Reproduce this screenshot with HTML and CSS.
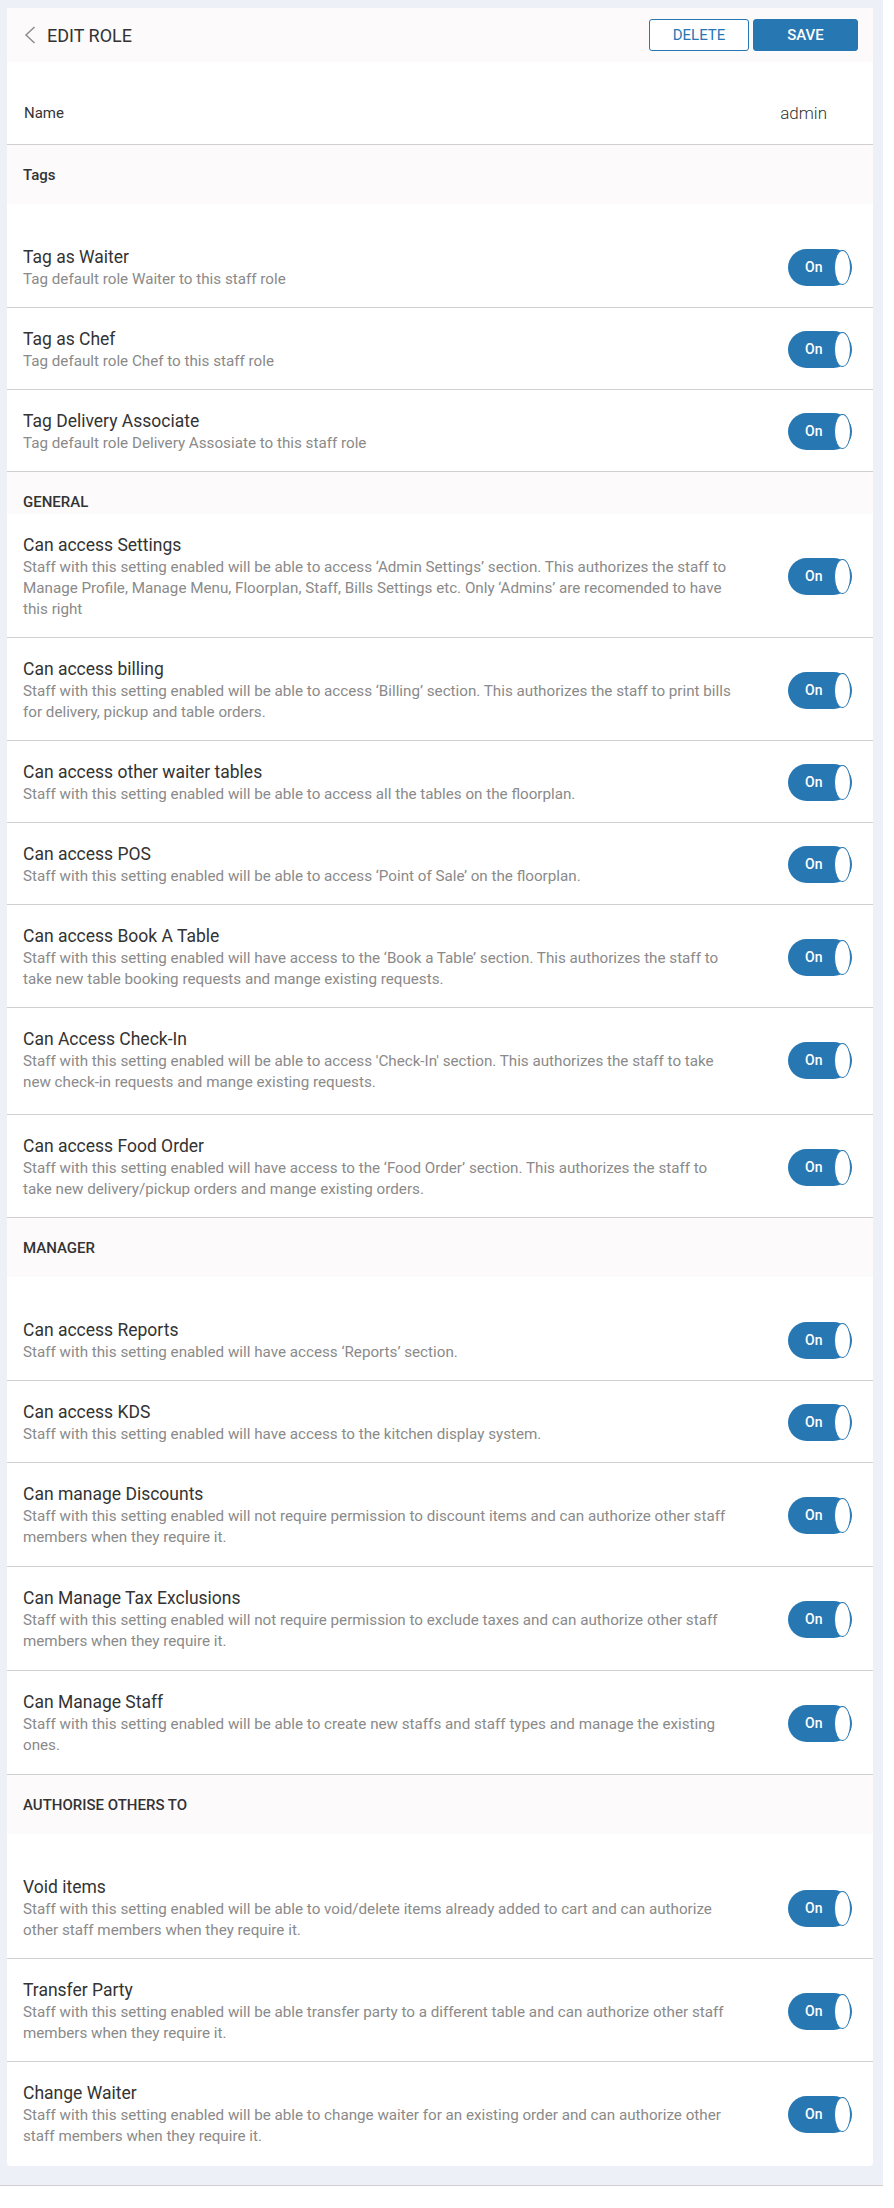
FILE: index.html
```html
<!DOCTYPE html>
<html>

<head>
  <meta charset="utf-8">
  <title>Edit Role</title>
  <link rel="stylesheet" href="styles.css">
</head>

<body>
  <div class="page">
    <div class="card">

      <div class="topbar">
        <div class="topbar-title">
          <svg class="back" width="12" height="18" viewBox="0 0 12 18">
            <path d="M10.5 1 L2 9 L10.5 17" fill="none" stroke="#8d8d8d" stroke-width="1.5" />
          </svg>
          <span>EDIT ROLE</span>
        </div>
        <div class="topbar-actions">
          <button class="btn btn-outline">DELETE</button>
          <button class="btn btn-primary">SAVE</button>
        </div>
      </div>

      <div class="name-row">
        <span class="name-label">Name</span>
        <span class="name-value">admin</span>
      </div>

      <!-- Tags -->
      <div class="section-head">Tags</div>
      <div class="section-body">
        <div class="row">
          <div class="row-text">
            <div class="row-title">Tag as Waiter</div>
            <div class="row-desc">Tag default role Waiter to this staff role</div>
          </div>
          <div class="toggle"><span>On</span></div>
        </div>
        <div class="row">
          <div class="row-text">
            <div class="row-title">Tag as Chef</div>
            <div class="row-desc">Tag default role Chef to this staff role</div>
          </div>
          <div class="toggle"><span>On</span></div>
        </div>
        <div class="row">
          <div class="row-text">
            <div class="row-title">Tag Delivery Associate</div>
            <div class="row-desc">Tag default role Delivery Assosiate to this staff role</div>
          </div>
          <div class="toggle"><span>On</span></div>
        </div>
      </div>

      <!-- General -->
      <div class="section-head section-head--short">GENERAL</div>
      <div class="section-body section-body--flush">
        <div class="row">
          <div class="row-text">
            <div class="row-title">Can access Settings</div>
            <div class="row-desc">Staff with this setting enabled will be able to access ‘Admin Settings’ section. This authorizes the staff to Manage Profile, Manage Menu, Floorplan, Staff, Bills Settings etc. Only ‘Admins’ are recomended to have this right</div>
          </div>
          <div class="toggle"><span>On</span></div>
        </div>
        <div class="row">
          <div class="row-text">
            <div class="row-title">Can access billing</div>
            <div class="row-desc">Staff with this setting enabled will be able to access ‘Billing’ section. This authorizes the staff to print bills for delivery, pickup and table orders.</div>
          </div>
          <div class="toggle"><span>On</span></div>
        </div>
        <div class="row">
          <div class="row-text">
            <div class="row-title">Can access other waiter tables</div>
            <div class="row-desc">Staff with this setting enabled will be able to access all the tables on the floorplan.</div>
          </div>
          <div class="toggle"><span>On</span></div>
        </div>
        <div class="row">
          <div class="row-text">
            <div class="row-title">Can access POS</div>
            <div class="row-desc">Staff with this setting enabled will be able to access ‘Point of Sale’ on the floorplan.</div>
          </div>
          <div class="toggle"><span>On</span></div>
        </div>
        <div class="row">
          <div class="row-text">
            <div class="row-title">Can access Book A Table</div>
            <div class="row-desc">Staff with this setting enabled will have access to the ‘Book a Table’ section. This authorizes the staff to take new table booking requests and mange existing requests.</div>
          </div>
          <div class="toggle"><span>On</span></div>
        </div>
        <div class="row row--looser">
          <div class="row-text">
            <div class="row-title">Can Access Check-In</div>
            <div class="row-desc">Staff with this setting enabled will be able to access 'Check-In' section. This authorizes the staff to take new check-in requests and mange existing requests.</div>
          </div>
          <div class="toggle"><span>On</span></div>
        </div>
        <div class="row">
          <div class="row-text">
            <div class="row-title">Can access Food Order</div>
            <div class="row-desc">Staff with this setting enabled will have access to the ‘Food Order’ section. This authorizes the staff to take new delivery/pickup orders and mange existing orders.</div>
          </div>
          <div class="toggle"><span>On</span></div>
        </div>
      </div>

      <!-- Manager -->
      <div class="section-head">MANAGER</div>
      <div class="section-body">
        <div class="row">
          <div class="row-text">
            <div class="row-title">Can access Reports</div>
            <div class="row-desc">Staff with this setting enabled will have access ‘Reports’ section.</div>
          </div>
          <div class="toggle"><span>On</span></div>
        </div>
        <div class="row">
          <div class="row-text">
            <div class="row-title">Can access KDS</div>
            <div class="row-desc">Staff with this setting enabled will have access to the kitchen display system.</div>
          </div>
          <div class="toggle"><span>On</span></div>
        </div>
        <div class="row row--loose">
          <div class="row-text">
            <div class="row-title">Can manage Discounts</div>
            <div class="row-desc">Staff with this setting enabled will not require permission to discount items and can authorize other staff members when they require it.</div>
          </div>
          <div class="toggle"><span>On</span></div>
        </div>
        <div class="row row--loose">
          <div class="row-text">
            <div class="row-title">Can Manage Tax Exclusions</div>
            <div class="row-desc">Staff with this setting enabled will not require permission to exclude taxes and can authorize other staff members when they require it.</div>
          </div>
          <div class="toggle"><span>On</span></div>
        </div>
        <div class="row row--loose">
          <div class="row-text">
            <div class="row-title">Can Manage Staff</div>
            <div class="row-desc">Staff with this setting enabled will be able to create new staffs and staff types and manage the existing ones.</div>
          </div>
          <div class="toggle"><span>On</span></div>
        </div>
      </div>

      <!-- Authorise others -->
      <div class="section-head">AUTHORISE OTHERS TO</div>
      <div class="section-body">
        <div class="row">
          <div class="row-text">
            <div class="row-title">Void items</div>
            <div class="row-desc">Staff with this setting enabled will be able to void/delete items already added to cart and can authorize other staff members when they require it.</div>
          </div>
          <div class="toggle"><span>On</span></div>
        </div>
        <div class="row">
          <div class="row-text">
            <div class="row-title">Transfer Party</div>
            <div class="row-desc">Staff with this setting enabled will be able transfer party to a different table and can authorize other staff members when they require it.</div>
          </div>
          <div class="toggle"><span>On</span></div>
        </div>
        <div class="row">
          <div class="row-text">
            <div class="row-title">Change Waiter</div>
            <div class="row-desc">Staff with this setting enabled will be able to change waiter for an existing order and can authorize other staff members when they require it.</div>
          </div>
          <div class="toggle"><span>On</span></div>
        </div>
      </div>

    </div>
  </div>
</body>

</html>
```

FILE: styles.css
```css
body {
  margin: 0;
  background-color: #fff;
  font-family: Roboto, "Liberation Sans", sans-serif;
  color: #333;
}

.page {
  width: 883px;
  box-sizing: border-box;
  padding: 8px 10px 19px 7px;
  background-color: #edf0f7;
  border-bottom: 1px solid #cfcfd2;
}

.card {
  background-color: #fff;
  border-radius: 0 0 4px 4px;
  overflow: hidden;
}

/* top bar */
.topbar {
  height: 54px;
  display: flex;
  align-items: center;
  justify-content: space-between;
  padding: 0 15px 0 17px;
  background-color: #fcfafb;
}

.topbar-title {
  display: flex;
  align-items: center;
  font-size: 18px;
  color: #333;
}

.back {
  margin-right: 11px;
}

.topbar-actions {
  display: flex;
  gap: 4px;
}

.btn {
  height: 32px;
  border-radius: 3px;
  font-family: Roboto, "Liberation Sans", sans-serif;
  font-size: 15px;
  cursor: pointer;
}

.btn-outline {
  width: 100px;
  background-color: #fff;
  border: 1px solid #2777b3;
  color: #2777b3;
}

.btn-primary {
  width: 105px;
  background-color: #2777b3;
  border: 1px solid #2777b3;
  color: #fff;
  font-weight: 500;
}

/* name */
.name-row {
  display: flex;
  justify-content: space-between;
  align-items: center;
  padding: 40px 46px 20px 17px;
  line-height: 22px;
  border-bottom: 1px solid #d0d0d0;
}

.name-label {
  font-size: 15px;
}

.name-value {
  font-size: 17px;
  font-weight: 300;
}

/* sections */
.section-head {
  height: 59px;
  box-sizing: border-box;
  padding: 21px 16px 0;
  line-height: 18px;
  font-size: 15px;
  font-weight: 500;
  background-color: #fcfafb;
}

.section-head--short {
  height: 42px;
}

.section-body {
  padding-top: 22px;
}

.section-body--flush {
  padding-top: 0;
}

.row {
  display: flex;
  align-items: center;
  gap: 54px;
  padding: 19px 21px 17px 16px;
  border-bottom: 1px solid #d0d0d0;
}

.row--loose {
  padding-bottom: 18px;
}

.row--looser {
  padding-bottom: 21px;
}

.card > .section-body:last-child .row:last-child {
  border-bottom: none;
  padding-bottom: 19px;
}

.row-text {
  flex: 1;
}

.row-title {
  font-size: 17.5px;
  line-height: 24px;
  color: #333;
}

.row-desc {
  font-size: 15.2px;
  line-height: 21px;
  color: #8a8a8a;
}

/* toggle */
.toggle {
  position: relative;
  width: 64px;
  height: 37px;
  flex-shrink: 0;
  border-radius: 19px;
  background-color: #2777b3;
}

.toggle span {
  position: absolute;
  left: 17px;
  top: 0;
  line-height: 37px;
  font-size: 14px;
  font-weight: 500;
  color: #fff;
}

.toggle::after {
  content: "";
  position: absolute;
  right: 1px;
  top: 1px;
  width: 15px;
  height: 33px;
  border-radius: 50%;
  background-color: #fff;
  border: 1px solid #2777b3;
}
```
